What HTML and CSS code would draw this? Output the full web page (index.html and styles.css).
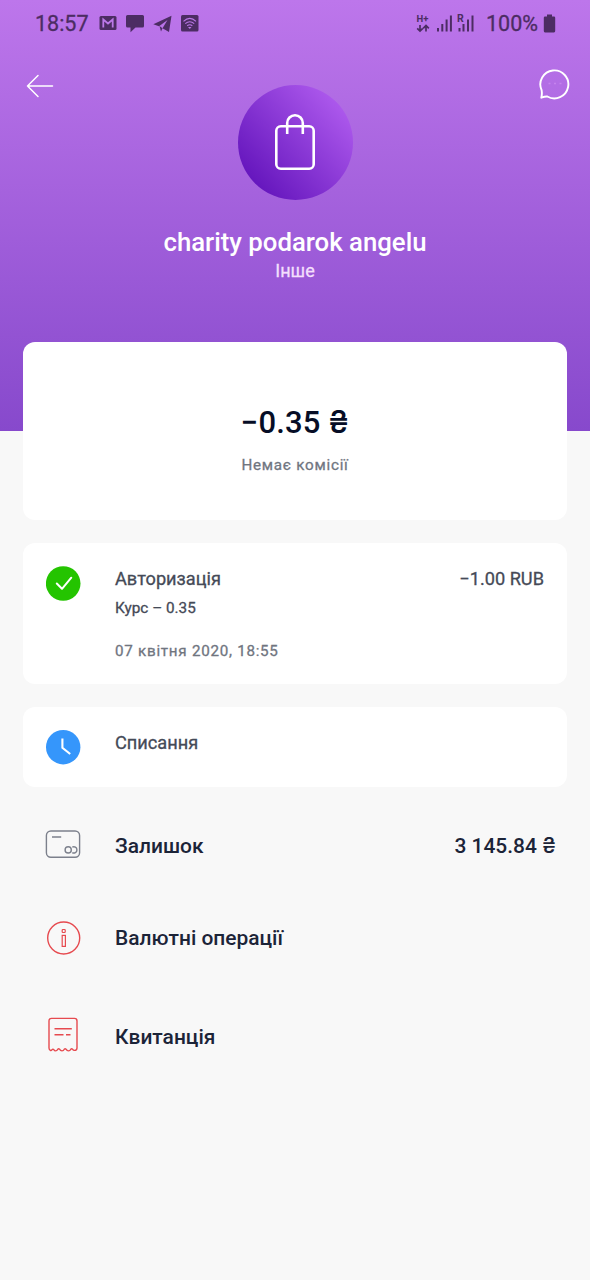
FILE: index.html
```html
<!DOCTYPE html>
<html lang="uk">
<head>
<meta charset="utf-8">
<title>charity podarok angelu</title>
<link rel="stylesheet" href="styles.css">
</head>
<body>
<div class="screen">
  <div class="status">
    <div class="status-left">
      <span class="clock">18:57</span>
      <svg class="notes" width="102" height="20" viewBox="0 0 102 20">
        <rect x="0.5" y="3" width="17" height="14" rx="1.5" fill="#4c2c63"/>
        <path d="M4.300 14.500V6.500L9 10.500L13.700 6.500V14.500" fill="none" stroke="#bb78e8" stroke-width="1.800"/>
        <path d="M28.500 2H43.500Q45 2 45 3.500V13Q45 14.500 43.500 14.500H36.500L31.500 19.300V14.500H28.500Q27 14.500 27 13V3.500Q27 2 28.500 2Z" fill="#4c2c63"/>
        <path d="M54.300 11.300L72.500 2.800L70 19L63.500 15.200L68.500 7L60 13.300Z" fill="#4c2c63"/>
        <path d="M60.500 13L63.500 15.200L62 18.500Z" fill="#4c2c63"/>
        <rect x="82" y="2" width="17.500" height="16.500" rx="1.500" fill="#4c2c63"/>
        <path d="M84.500 8.300Q90.800 2.500 97 8.300M86.300 10.700Q90.800 6.800 95.200 10.700M88.200 12.700Q90.800 10.700 93.300 12.700" fill="none" stroke="#bb78e8" stroke-width="1.100"/>
        <path d="M89 14L90.800 16L92.500 14Z" fill="#bb78e8"/>
      </svg>
    </div>
    <div class="status-right">
      <svg width="60" height="24" viewBox="0 0 60 24">
        <text class="net" x="0.500" y="10.200">H+</text>
        <path d="M4 13V19M1.200 16.300L4 19.100L6.800 16.300M10 19.500V13.700M7.200 16.400L10 13.500L12.800 16.400" fill="none" stroke="#4c2c63" stroke-width="1.700"/>
        <path d="M22 16V19.500M26.300 12V19.500M30.600 7.500V19.500M34.900 3.500V19.500M43.500 16V19.500M47.500 12V19.500M52 7.500V19.500M56.500 3.500V19.500" stroke="#4c2c63" stroke-width="2"/>
        <text class="roam" x="41" y="9.500">R</text>
      </svg>
      <span class="percent">100%</span>
      <svg width="13" height="20" viewBox="0 0 13 20"><path d="M4 0.500H9V2.500H11Q12.200 2.500 12.200 3.700V17Q12.200 18.400 11 18.400H2Q0.800 18.400 0.800 17V3.700Q0.800 2.500 2 2.500H4Z" fill="#4c2c63"/></svg>
    </div>
  </div>

  <header class="header">
    <svg class="back" width="28" height="24" viewBox="0 0 28 24"><path d="M26.500 12H1.500M12 1.500L1.500 12L12 22.500" fill="none" stroke="#fff" stroke-width="1.500" stroke-linecap="round" stroke-linejoin="round"/></svg>
    <div class="hero">
      <div class="avatar">
        <svg width="42" height="58" viewBox="0 0 42 58"><rect x="2.300" y="13.300" width="37.400" height="42.400" rx="4.500" fill="none" stroke="#fff" stroke-width="2.600"/><path d="M13.200 21V10A7.800 7.800 0 0 1 28.800 10V21" fill="none" stroke="#fff" stroke-width="2.600"/></svg>
      </div>
      <h1 class="title">charity podarok angelu</h1>
      <div class="category">Інше</div>
    </div>
    <svg class="chat" width="32" height="32" viewBox="0 0 32 32"><path d="M2.600 22.200A14 14 0 1 1 8.300 28.500Q6.500 28.200 2.300 29.700Q3.300 26 2.600 22.200Z" fill="none" stroke="#fff" stroke-width="1.900" stroke-linejoin="round"/><path d="M9.500 15.500h2M15 15.500h2M20.500 15.500h2" stroke="#c583ee" stroke-width="1.300"/></svg>
  </header>

  <div class="cards">
    <section class="card amount-card">
      <div class="amount">−0.35 ₴</div>
      <div class="fee">Немає комісії</div>
    </section>
    <section class="card step step-auth">
      <svg class="badge" width="35" height="35" viewBox="0 0 35 35"><circle cx="17.200" cy="17.500" r="17.300" fill="#24c400"/><path d="M10.800 17.500L16 22.800L25.300 11.700" fill="none" stroke="#fff" stroke-width="2" stroke-linecap="round" stroke-linejoin="round"/></svg>
      <div class="step-body">
        <div class="step-head"><span class="step-auth-name">Авторизація</span><span class="step-sum">−1.00 RUB</span></div>
        <div class="rate">Курс – 0.35</div>
        <div class="date">07 квітня 2020, 18:55</div>
      </div>
    </section>
    <section class="card step step-debit">
      <svg class="badge" width="35" height="35" viewBox="0 0 35 35"><circle cx="17.200" cy="17.200" r="17.200" fill="#3596fb"/><path d="M16.400 8.500V17.800L24.200 24" fill="none" stroke="#fff" stroke-width="2.100"/></svg>
      <div class="step-body"><div class="step-head"><span class="step-debit-name">Списання</span></div></div>
    </section>
  </div>

  <div class="rows">
    <div class="row row-balance">
      <svg width="36" height="36" viewBox="0 0 36 36"><rect x="1.400" y="5" width="33.200" height="26.200" rx="4.500" fill="none" stroke="#7c808c" stroke-width="1.400"/><path d="M7 11H16.200" stroke="#7c808c" stroke-width="1.500"/><circle cx="23.200" cy="23.900" r="3.100" fill="none" stroke="#7c808c" stroke-width="1.400"/><path d="M27.300 21.200A3.100 3.100 0 1 1 27.300 26.600" fill="none" stroke="#7c808c" stroke-width="1.400"/></svg>
      <span class="row-balance-name">Залишок</span><span class="balance">3 145.84 ₴</span>
    </div>
    <div class="row row-ops">
      <svg width="36" height="36" viewBox="0 0 36 36"><circle cx="18.700" cy="18" r="16" fill="none" stroke="#e64a4f" stroke-width="1.400"/><rect x="17.200" y="9.500" width="3" height="3" rx="0.700" fill="none" stroke="#e64a4f" stroke-width="1.200"/><rect x="17.200" y="15.400" width="3.200" height="11" fill="none" stroke="#e64a4f" stroke-width="1.200"/></svg>
      <span class="row-ops-name">Валютні операції</span>
    </div>
    <div class="row row-receipt">
      <svg width="36" height="36" viewBox="0 0 36 36"><path d="M6.500 1.400H29.500Q32 1.400 32 3.900V31Q32 33.400 29.500 33.400Q28.200 33.400 27.500 32.200Q26.700 31.300 25.800 32.200Q25 33.900 23.500 33.900Q22 33.900 21 32.200Q20.200 31.300 19.300 32.200Q18.500 33.900 17 33.900Q15.500 33.900 14.500 32.200Q13.700 31.300 12.800 32.200Q12 33.900 10.500 33.900Q9.500 33.900 8.800 32.700Q8 31.500 7 32.800Q6.200 33.700 5.300 33.300Q4 32.700 4 31V3.900Q4 1.400 6.500 1.400Z" fill="none" stroke="#e64a4f" stroke-width="1.400"/><path d="M9.500 11.800H26.800M9.500 17.800H18.500M21 17.800H25.500" stroke="#e64a4f" stroke-width="1.400"/></svg>
      <span class="row-receipt-name">Квитанція</span>
    </div>
  </div>
</div>
</body>
</html>
```
FILE: styles.css
```css
* { box-sizing: border-box; }
body {
  margin: 0;
  font-family: Roboto, Inter, sans-serif;
  font-weight: 500;
}
.screen {
  height: 1280px;
  overflow: hidden;
  background: linear-gradient(#bd76eb, #8749cc) 0 0 / 100% 431px no-repeat, #f8f8f8;
}
svg { display: block; flex: none; }

.status {
  display: flex;
  justify-content: space-between;
  height: 47px;
  padding: 0 34px 0 35px;
  color: #4c2c63;
  font-size: 21.5px;
  font-weight: 400;
}
.clock, .percent { -webkit-text-stroke: 0.3px currentColor; }
.status-left, .status-right { display: flex; align-items: center; }
.notes { margin-left: 10px; margin-top: -1px; }
.net { font-size: 9.5px; font-weight: 700; fill: #4c2c63; }
.roam { font-size: 10.5px; font-weight: 700; fill: #4c2c63; }
.percent { margin: 0 5px 0 10px; }

.header {
  display: grid;
  grid-template-columns: 60px 1fr 60px;
  align-items: start;
  height: 295px;
}
.back { margin: 27px 0 0 26px; }
.chat { margin: 21px 0 0 9px; }
.hero {
  display: flex;
  flex-direction: column;
  align-items: center;
  padding-top: 38px;
  color: #fff;
}
.avatar {
  display: flex;
  align-items: center;
  justify-content: center;
  width: 115px;
  height: 115px;
  padding-bottom: 2px;
  border-radius: 50%;
  background: linear-gradient(48deg, #6516bd 14%, #ac58ec 86%);
}
.title { margin: 26px 0 0; font-size: 25.75px; line-height: 32px; font-weight: 500; }
.category { margin-top: 2px; font-size: 18px; line-height: 22px; font-weight: 400; color: #f4dffd; -webkit-text-stroke: 0.3px currentColor; }

.cards { display: flex; flex-direction: column; gap: 23px; padding: 0 23px; }
.card { background: #fff; border-radius: 12px; }
.amount-card {
  display: flex;
  flex-direction: column;
  align-items: center;
  height: 178px;
  padding-top: 62px;
}
.amount { font-size: 31px; line-height: 38px; letter-spacing: 0.15px; color: #060d26; }
.fee {
  margin-top: 13px;
  font-size: 15.2px;
  line-height: 20px;
  font-weight: 400;
  letter-spacing: 0.75px;
  color: #70757f;
  -webkit-text-stroke: 0.3px currentColor;
}

.step {
  display: flex;
  gap: 34px;
  padding: 23px;
  color: #454a57;
  font-weight: 400;
  -webkit-text-stroke: 0.3px currentColor;
}
.step-auth { height: 141px; }
.step-debit { height: 80px; }
.step-body { flex: 1; }
.step-head { display: flex; justify-content: space-between; font-size: 18.2px; line-height: 26px; }
.rate { margin-top: 6px; font-size: 15.3px; line-height: 20px; }
.date { margin-top: 23px; font-size: 15.2px; line-height: 20px; letter-spacing: 0.73px; color: #70757f; }

.rows { padding: 0 34px 0 45px; color: #1c2438; }
.row { display: flex; align-items: center; gap: 34px; font-size: 20.95px; line-height: 26px; }
.row-balance { margin-top: 39px; }
.row-balance span { padding-top: 3px; }
.row-ops { margin-top: 58px; }
.row-receipt { margin-top: 61px; }
.row-receipt span { padding-top: 3px; }
.balance { margin-left: auto; }
```
